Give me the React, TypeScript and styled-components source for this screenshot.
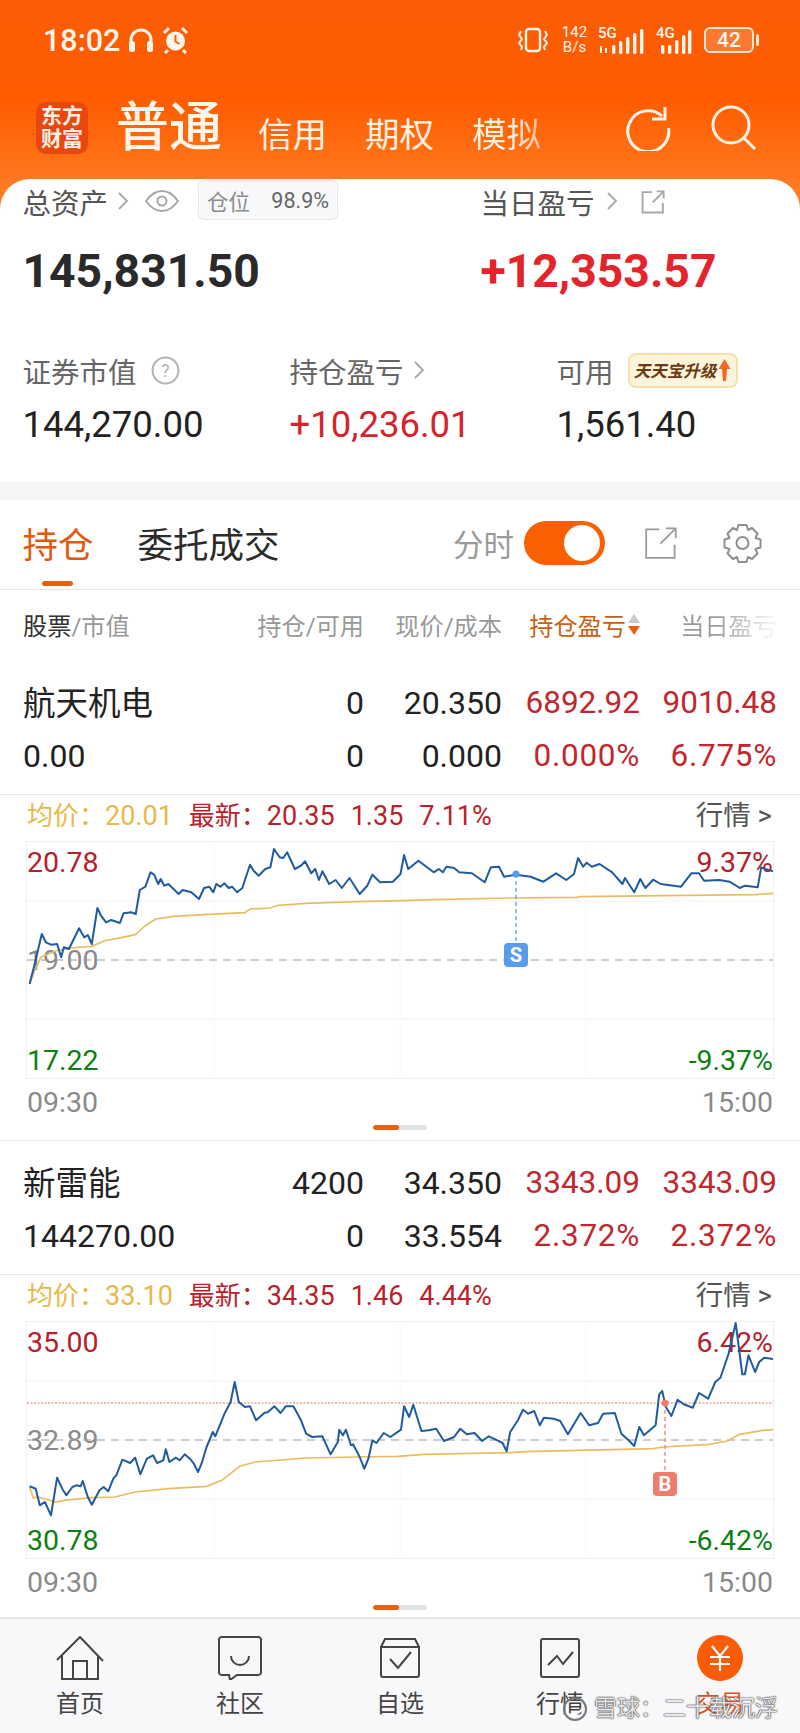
import React from 'react';
import styled, { createGlobalStyle } from 'styled-components';

const GlobalStyle = createGlobalStyle`
  html, body {
    margin: 0;
    padding: 0;
    background: #fff;
  }
  * {
    box-sizing: border-box;
  }
  body {
    font-family: Roboto, "Noto Sans CJK SC", "Noto Sans", sans-serif;
  }
`;

const Page = styled.div`
  position: relative;
  width: 800px;
  height: 1733px;
  overflow: hidden;
  display: flex;
  flex-direction: column;
  background: #fff;
`;

const Header = styled.header`
  flex: none;
  height: 209px;
  color: #fff;
  background: linear-gradient(180deg, #fb5c04 0%, #ff5c00 48%, #ff7a20 88%, #ff7f28 100%);
`;

const StatusBar = styled.div`
  height: 80px;
  display: flex;
  align-items: center;
  padding: 0 46px 0 43px;
`;

const Clock = styled.span`
  font-size: 30.5px;
  font-weight: 500;
  margin-right: 8px;
  color: #fff5ea;
`;

const StatusRight = styled.div`
  margin-left: auto;
  display: flex;
  align-items: center;
  gap: 12px;
`;

const NetSpeed = styled.div`
  font-size: 15px;
  line-height: 15px;
  text-align: center;
  color: #fff5ea;
  width: 27px;
  margin-right: -2px;
`;

const Signal = styled.div<{ $width: number }>`
  position: relative;
  width: ${(p) => p.$width}px;
  height: 28px;
`;

const SignalLabel = styled.span`
  position: absolute;
  left: 0;
  top: 0;
  font-size: 15px;
  line-height: 15px;
  font-weight: 500;
  color: #fff5ea;
`;

const Battery = styled.div`
  width: 50px;
  height: 26px;
  border: 2px solid #ffe6d0;
  border-radius: 6px;
  background: rgba(255, 255, 255, 0.18);
  font-size: 21px;
  font-weight: 500;
  line-height: 22px;
  text-align: center;
  color: #fff5ea;
  position: relative;

  &::after {
    content: '';
    position: absolute;
    right: -7px;
    top: 5px;
    width: 3px;
    height: 12px;
    border-radius: 2px;
    background: #ffe6d0;
  }
`;

const TradeBar = styled.div`
  height: 96px;
  display: flex;
  align-items: center;
  padding: 0 43px 0 36px;
`;

const Logo = styled.div`
  width: 52px;
  height: 52px;
  border-radius: 10px;
  background: #e8480f;
  font-size: 21px;
  line-height: 23px;
  font-weight: 700;
  text-align: center;
  padding-top: 3px;
  margin-right: 28px;
  color: #fff0e4;
`;

const ActiveMode = styled.span`
  font-size: 53px;
  line-height: 60px;
  font-weight: 500;
  margin-right: 36px;
  color: #fff6ec;
`;

const Mode = styled.span<{ $fade?: boolean }>`
  font-size: 34.5px;
  line-height: 44px;
  margin-top: 14px;
  margin-right: 38px;
  color: #fff1e2;
  ${(p) =>
    p.$fade &&
    `
    background: linear-gradient(90deg, #fff1e2 60%, #ffb98a 100%);
    -webkit-background-clip: text;
    background-clip: text;
    color: transparent;
  `}
`;

const HeaderIcons = styled.div`
  margin-left: auto;
  display: flex;
  gap: 40px;
`;

const Summary = styled.section`
  position: relative;
  flex: none;
  margin-top: -30px;
  height: 303px;
  border-radius: 30px 30px 0 0;
  background: #fff;
  padding-left: 22.5px;
`;

const SummaryGrid = styled.div`
  display: grid;
  grid-template-columns: 458px 1fr;
`;

const SummaryHead = styled.div`
  height: 44px;
  display: flex;
  align-items: center;
  font-size: 28.5px;
  color: #555;
`;

const Amount = styled.div<{ $red?: boolean }>`
  height: 96px;
  display: flex;
  align-items: center;
  font-size: 46.3px;
  font-weight: 700;
  color: ${(p) => (p.$red ? '#e3242b' : '#2a2a2a')};
`;

const MetricGrid = styled.div`
  margin-top: 29px;
  display: grid;
  grid-template-columns: 267px 267px 1fr;
`;

const MetricLabel = styled.div`
  height: 44px;
  display: flex;
  align-items: center;
  font-size: 28.5px;
  color: #666;
`;

const MetricValue = styled.div<{ $red?: boolean }>`
  margin-top: 11px;
  height: 44px;
  line-height: 44px;
  font-size: 36.5px;
  color: ${(p) => (p.$red ? '#d5242c' : '#222')};
`;

const Pill = styled.div`
  width: 140px;
  height: 40px;
  margin-left: 19px;
  margin-top: -2px;
  display: flex;
  align-items: center;
  justify-content: space-between;
  padding: 0 8px;
  border: 1px solid #e8e8ea;
  border-radius: 6px;
  background: #f7f8fa;
  font-size: 21.5px;
  color: #666;
`;

const PillLabel = styled.span`
  color: #8b8b8b;
`;

const UpgradeBadge = styled.div`
  margin-left: 14px;
  width: 110px;
  height: 35px;
  display: flex;
  align-items: center;
  justify-content: center;
  gap: 2px;
  border: 2px solid #f6e2a8;
  border-radius: 8px;
  background: #fdf4dd;
  font-size: 16.5px;
  font-weight: 700;
  font-style: italic;
  white-space: nowrap;
  color: #6a3b12;
`;

const Band = styled.div`
  flex: none;
  height: 18px;
  background: #f6f6f6;
`;

const TabBar = styled.div`
  flex: none;
  height: 90px;
  display: flex;
  align-items: center;
  padding: 0 37px 4px 22.5px;
  border-bottom: 1px solid #e6e6e6;
`;

const Tab = styled.span<{ $active?: boolean }>`
  position: relative;
  font-size: 35.5px;
  margin-right: 44px;
  color: ${(p) => (p.$active ? '#e0590f' : '#2b2b2b')};

  ${(p) =>
    p.$active &&
    `
    &::after {
      content: '';
      position: absolute;
      left: 19px;
      top: 64px;
      width: 31px;
      height: 5px;
      border-radius: 3px;
      background: #e8600f;
    }
  `}
`;

const TabTools = styled.div`
  margin-left: auto;
  display: flex;
  align-items: center;
`;

const ToolLabel = styled.span`
  font-size: 30.5px;
  color: #9a9a9a;
  margin-right: 10px;
`;

const Toggle = styled.div`
  position: relative;
  width: 81px;
  height: 44px;
  margin-right: 39px;
  border-radius: 22px;
  background: #fa6000;

  &::after {
    content: '';
    position: absolute;
    right: 5px;
    top: 4px;
    width: 36px;
    height: 36px;
    border-radius: 50%;
    background: #fff;
  }
`;

const ToolGap = styled.span`
  display: inline-block;
  width: 43px;
`;

const StockGrid = styled.div<{ $header?: boolean }>`
  flex: none;
  display: grid;
  grid-template-columns: 234px 107px 138px 138px 137px;
  padding: 0 23px;
  align-items: center;
  height: ${(p) => (p.$header ? '68px' : '53px')};
`;

const ColHead = styled.div<{ $color?: string; $right?: boolean }>`
  font-size: 24.2px;
  color: ${(p) => p.$color || '#999'};
  text-align: ${(p) => (p.$right ? 'right' : 'left')};
  white-space: nowrap;
`;

const SortedHead = styled(ColHead)`
  display: flex;
  justify-content: flex-end;
  align-items: center;
  gap: 2px;
`;

const FadedHead = styled(ColHead)`
  background: linear-gradient(90deg, #999 55%, #f2f2f2 95%);
  -webkit-background-clip: text;
  background-clip: text;
  color: transparent;
`;

const Dark = styled.span`
  color: #333;
`;

const SortArrows = styled.span`
  display: flex;
  flex-direction: column;
  gap: 3px;
`;

const ArrowUp = styled.i`
  width: 0;
  height: 0;
  border: 6px solid transparent;
  border-top: 0;
  border-bottom: 9px solid #c9c9c9;
`;

const ArrowDown = styled.i`
  width: 0;
  height: 0;
  border: 6px solid transparent;
  border-bottom: 0;
  border-top: 9px solid #e8600f;
`;

const Cell = styled.div<{ $red?: boolean; $left?: boolean; $cjk?: boolean; $pct?: boolean }>`
  font-size: ${(p) => (p.$cjk ? '32.5px' : p.$red ? '31.5px' : '32px')};
  margin-top: ${(p) => (p.$cjk ? '-5px' : '0')};
  letter-spacing: ${(p) => (p.$pct ? '0.7px' : '0')};
  text-align: ${(p) => (p.$left ? 'left' : 'right')};
  color: ${(p) => (p.$red ? '#c1272d' : '#222')};
  white-space: nowrap;
`;

const StockRows = styled.div<{ $top: number }>`
  flex: none;
  padding: ${(p) => p.$top}px 0 12px;
  border-bottom: 1px solid #e8e8e8;
`;

const ChartBlock = styled.div`
  flex: none;
  padding: 0 26px;
`;

const ChartHead = styled.div`
  height: 46px;
  display: flex;
  align-items: baseline;
  gap: 16px;
  padding: 5px 2px 0 1px;
  font-size: 26px;
  line-height: 32px;
`;

const HeadGroup = styled.span<{ $color: string }>`
  color: ${(p) => p.$color};
  white-space: nowrap;
`;

const HeadNum = styled.span`
  font-size: 27px;
`;

const QuoteLink = styled.span`
  margin-left: auto;
  font-size: 27.5px;
  color: #555;
`;

const ChartFrame = styled.div`
  position: relative;
  height: 238px;
  border: 1px solid #efefef;
`;

const PlotSvg = styled.svg`
  position: absolute;
  left: 0;
  top: 0;
  width: 100%;
  height: 100%;
`;

const AxisLabel = styled.span<{ $y: number; $color: string; $right?: boolean }>`
  position: absolute;
  top: ${(p) => p.$y - 19}px;
  line-height: 38px;
  font-size: 28.5px;
  color: ${(p) => p.$color};
  ${(p) => (p.$right ? 'right: 0;' : 'left: 0;')}
`;

const TradeBadge = styled.span<{ $x: number; $y: number; $color: string }>`
  position: absolute;
  left: ${(p) => p.$x - 12}px;
  top: ${(p) => p.$y}px;
  width: 24px;
  height: 24px;
  border-radius: 4px;
  background: ${(p) => p.$color};
  color: #fff;
  font-size: 20px;
  font-weight: 700;
  line-height: 24px;
  text-align: center;
`;

const TimeRow = styled.div`
  height: 46px;
  display: flex;
  align-items: center;
  justify-content: space-between;
  padding: 0 1px;
  font-size: 28.5px;
  color: #8a8a8a;
`;

const Pager = styled.div`
  display: flex;
  justify-content: center;
  width: 54px;
  height: 5px;
  margin: 0 auto;
  border-radius: 3px;
  overflow: hidden;
  background: #e3e3e3;

  &::before {
    content: '';
    width: 26px;
    height: 5px;
    margin-right: auto;
    background: #e8600f;
    border-radius: 3px;
  }
`;

const PagerWrap = styled.div<{ $bottom: number }>`
  padding-bottom: ${(p) => p.$bottom}px;
`;

const SectionEnd = styled.div`
  flex: none;
  border-bottom: 1px solid #ececec;
`;

const BottomNav = styled.nav`
  margin-top: auto;
  flex: none;
  height: 116px;
  display: grid;
  grid-template-columns: repeat(5, 160px);
  border-top: 2px solid #e6e6e6;
  background: #f8f8fa;
`;

const NavItem = styled.div<{ $active?: boolean }>`
  display: flex;
  flex-direction: column;
  align-items: center;
  padding-top: 15px;
  font-size: 24px;
  color: ${(p) => (p.$active ? '#d9541a' : '#444')};
`;

const NavIconSlot = styled.div`
  height: 47px;
  display: flex;
  align-items: center;
  justify-content: center;
`;

const NavLabel = styled.span`
  margin-top: 5px;
  line-height: 36px;
`;

const Watermark = styled.div`
  position: absolute;
  right: 22px;
  bottom: 9px;
  display: flex;
  align-items: center;
  gap: 6px;
  font-size: 23px;
  line-height: 30px;
  color: rgba(255, 255, 255, 0.88);
  text-shadow: 0 0 1px #444, 0 0 1px #444, 0 0 2px #666;
`;

/* ---- chart data, traced from the picture ---- */

const line1 =
  '58,550 68,490 82,400 90,425 100,432 112,430 120,470 125,440 135,445 155,383 165,410 172,403 180,430 191,322 198,345 208,365 218,358 235,367 242,338 258,335 266,340 274,268 285,258 295,215 302,222 310,250 315,235 322,255 330,250 350,280 358,268 375,275 390,295 400,262 410,258 418,275 424,250 432,258 440,248 448,262 455,258 465,275 475,262 490,192 497,210 507,225 520,205 530,200 537,145 548,170 555,172 563,155 578,205 590,195 598,182 610,218 618,205 625,238 632,212 645,250 658,238 670,262 685,232 705,280 720,255 730,222 745,245 770,243 785,220 792,163 800,205 820,180 850,215 860,205 868,215 875,198 890,202 900,215 925,218 950,245 962,200 978,198 988,228 1012,222 1040,228 1065,243 1090,218 1110,238 1125,220 1133,172 1143,198 1150,186 1160,198 1175,190 1200,215 1220,250 1225,232 1243,275 1255,235 1265,262 1280,237 1295,250 1335,258 1355,218 1370,218 1380,240 1410,238 1430,243 1450,262 1460,255 1485,260 1492,200 1500,205 1515,212';
const avg1 =
  '58,550 68,510 80,470 110,450 140,442 180,437 205,420 240,410 265,402 285,375 305,355 340,347 400,342 480,336 490,325 530,322 545,314 600,308 700,303 790,300 850,297 1000,292 1130,290 1140,288 1300,285 1480,282 1515,278';
const line2 =
  '58,648 70,655 78,705 88,695 100,735 112,622 122,655 130,675 142,650 150,645 158,648 162,632 172,680 180,703 195,660 203,650 212,663 222,625 228,615 240,568 255,578 265,562 275,612 288,565 300,555 308,578 320,570 325,537 332,575 345,562 352,570 362,552 372,565 380,580 388,605 395,580 405,530 417,485 422,498 440,430 452,395 460,335 468,395 480,410 490,408 502,450 518,428 525,425 538,408 550,428 560,408 575,408 590,450 600,490 612,500 632,498 648,552 662,515 665,478 672,495 678,478 688,525 692,522 705,560 714,595 722,565 730,510 738,518 752,488 765,500 786,478 792,408 802,440 810,403 826,482 840,480 855,475 870,512 890,500 902,475 915,492 930,488 945,512 958,498 975,510 985,518 993,543 1000,485 1015,450 1025,418 1035,430 1047,422 1058,465 1066,442 1085,445 1098,452 1113,492 1138,428 1155,465 1172,458 1182,430 1205,428 1218,490 1232,510 1243,527 1253,470 1262,495 1285,465 1292,372 1298,362 1305,410 1316,437 1328,388 1340,402 1358,412 1370,368 1388,385 1402,335 1412,322 1428,250 1442,158 1455,312 1460,312 1467,255 1480,305 1488,275 1498,262 1515,266';
const avg2 =
  '58,650 65,682 75,680 110,695 125,690 180,682 225,680 265,665 330,655 405,648 435,630 470,588 500,575 600,563 700,560 780,558 830,552 1000,547 1030,544 1280,535 1300,530 1390,522 1425,512 1450,492 1495,480 1515,478';

// traced coordinates are in the scale of the crop (1.96 wide, 3 high)
const toPlot = (pts: string, y0: number) =>
  pts
    .split(' ')
    .map((p) => {
      const [x, y] = p.split(',').map(Number);
      return `${(x / 1.96 - 27).toFixed(1)},${((y - y0) / 3).toFixed(1)}`;
    })
    .join(' ');

type ChartInfo = {
  avg: string;
  latest: string;
  change: string;
  pct: string;
  high: string;
  mid: string;
  low: string;
  up: string;
  down: string;
  price: string;
  mean: string;
  y0: number;
  markX: number;
  markY: number;
  badgeY: number;
  badge: string;
  badgeColor: string;
  cost?: number;
};

const PlotLines = ({ c }: { c: ChartInfo }) => (
  <PlotSvg viewBox="0 0 746 236">
    {[59, 177].map((y) => (
      <line key={y} x1="0" x2="746" y1={y} y2={y} stroke="#f2f2f2" />
    ))}
    {[187, 373, 559].map((x) => (
      <line key={x} x1={x} x2={x} y1="0" y2="236" stroke="#f8f8f8" />
    ))}
    <line x1="0" x2="746" y1="118" y2="118" stroke="#999" strokeDasharray="8 6" strokeWidth="1.2" />
    {c.cost && (
      <line x1="0" x2="746" y1={c.cost} y2={c.cost} stroke="#d9785a" strokeDasharray="2 1.5" />
    )}
    <polyline points={toPlot(c.mean, c.y0)} fill="none" stroke="#e8bd62" strokeWidth="1.7" />
    <polyline points={toPlot(c.price, c.y0)} fill="none" stroke="#1f5b9e" strokeWidth="2" strokeLinejoin="round" />
    <line
      x1={c.markX}
      x2={c.markX}
      y1={c.markY}
      y2={c.badgeY}
      stroke={c.badgeColor}
      strokeDasharray="4 3"
      strokeWidth="1.3"
    />
    <circle cx={c.markX} cy={c.markY} r="3.5" fill={c.badgeColor} />
  </PlotSvg>
);

const Chart = ({ c, bottom }: { c: ChartInfo; bottom: number }) => (
  <ChartBlock>
    <ChartHead>
      <HeadGroup $color="#e9b949">均价：<HeadNum>{c.avg}</HeadNum></HeadGroup>
      <HeadGroup $color="#b9212c">最新：<HeadNum>{c.latest}</HeadNum></HeadGroup>
      <HeadGroup $color="#b9212c"><HeadNum>{c.change}</HeadNum></HeadGroup>
      <HeadGroup $color="#b9212c"><HeadNum>{c.pct}</HeadNum></HeadGroup>
      <QuoteLink>行情 &gt;</QuoteLink>
    </ChartHead>
    <ChartFrame>
      <AxisLabel $y={21} $color="#b5202a">{c.high}</AxisLabel>
      <AxisLabel $y={119} $color="#8a8a8a">{c.mid}</AxisLabel>
      <AxisLabel $y={219} $color="#0c7f12">{c.low}</AxisLabel>
      <AxisLabel $y={21} $color="#b5202a" $right>{c.up}</AxisLabel>
      <AxisLabel $y={219} $color="#0c7f12" $right>{c.down}</AxisLabel>
      <PlotLines c={c} />
      <TradeBadge $x={c.markX} $y={c.badgeY} $color={c.badgeColor}>{c.badge}</TradeBadge>
    </ChartFrame>
    <TimeRow>
      <span>09:30</span>
      <span>15:00</span>
    </TimeRow>
    <PagerWrap $bottom={bottom}>
      <Pager />
    </PagerWrap>
  </ChartBlock>
);

/* ---- icons ---- */

const Chevron = ({ gap = 9 }: { gap?: number }) => (
  <svg width="12" height="20" viewBox="0 0 12 20" style={{ marginLeft: gap }}>
    <path d="M2 2l8 8-8 8" fill="none" stroke="#a8a8a8" strokeWidth="1.8" />
  </svg>
);

const ShareIcon = ({ size, color = '#aaa', sw = 2 }: { size: number; color?: string; sw?: number }) => (
  <svg width={size} height={size} viewBox="0 0 32 32">
    <path d="M14 4H2v26h26V18M20 3h9v9M29 3L15 17" fill="none" stroke={color} strokeWidth={sw} />
  </svg>
);

const App = () => {
  const first: ChartInfo = {
    avg: '20.01',
    latest: '20.35',
    change: '1.35',
    pct: '7.11%',
    high: '20.78',
    mid: '19.00',
    low: '17.22',
    up: '9.37%',
    down: '-9.37%',
    price: line1,
    mean: avg1,
    y0: 124,
    markX: 489,
    markY: 32,
    badgeY: 101,
    badge: 'S',
    badgeColor: '#5b9bee',
  };
  const second: ChartInfo = {
    avg: '33.10',
    latest: '34.35',
    change: '1.46',
    pct: '4.44%',
    high: '35.00',
    mid: '32.89',
    low: '30.78',
    up: '6.42%',
    down: '-6.42%',
    price: line2,
    mean: avg2,
    y0: 155,
    markX: 638,
    markY: 81,
    badgeY: 150,
    badge: 'B',
    badgeColor: '#ee7d70',
    cost: 81,
  };

  return (
    <Page>
      <GlobalStyle />
      <Header>
        <StatusBar>
          <Clock>18:02</Clock>
          <svg width="26" height="26" viewBox="0 0 26 26">
            <path d="M3 21V13a10 10 0 0 1 20 0v8" fill="none" stroke="#fff5ea" strokeWidth="3" />
            <rect x="1" y="14" width="6" height="11" rx="2.5" fill="#fff5ea" />
            <rect x="19" y="14" width="6" height="11" rx="2.5" fill="#fff5ea" />
          </svg>
          <svg width="27" height="28" viewBox="0 0 27 28" style={{ marginLeft: 8 }}>
            <circle cx="13.5" cy="15" r="9.5" fill="#fff5ea" />
            <path d="M13.5 9v6.5l4 2.5" fill="none" stroke="#fb5c04" strokeWidth="2" />
            <path d="M2 7l5-5M25 7l-5-5M6 24l-3 3M21 24l3 3" stroke="#fff5ea" strokeWidth="3" />
          </svg>
          <StatusRight>
            <svg width="32" height="26" viewBox="0 0 32 26">
              <rect x="9" y="2" width="14" height="22" rx="3" fill="none" stroke="#fff5ea" strokeWidth="2.4" />
              <path d="M4 4l-2 4 3 4-3 4 3 4-1 3M28 4l2 4-3 4 3 4-3 4 1 3" fill="none" stroke="#fff5ea" strokeWidth="2" />
            </svg>
            <NetSpeed>142<br />B/s</NetSpeed>
            <Signal $width={46}>
              <SignalLabel>5G</SignalLabel>
              <svg width="46" height="28" viewBox="0 0 46 28">
                <path d="M3 20v7M8 22v5" stroke="#fff5ea" strokeWidth="2" />
                {[14, 21, 28, 35, 42].map((x, i) => (
                  <rect key={x} x={x} y={19 - i * 4} width="3.4" height={9 + i * 4} rx="1.5" fill="#fff5ea" />
                ))}
              </svg>
            </Signal>
            <Signal $width={36}>
              <SignalLabel>4G</SignalLabel>
              <svg width="36" height="28" viewBox="0 0 36 28">
                {[5, 12, 19, 26, 32].map((x, i) => (
                  <rect key={x} x={x} y={i < 2 ? 19 : 19 - (i - 1) * 5} width="3.4" height={i < 2 ? 9 : 9 + (i - 1) * 5} rx="1.5" fill="#fff5ea" />
                ))}
              </svg>
            </Signal>
            <Battery>42</Battery>
          </StatusRight>
        </StatusBar>
        <TradeBar>
          <Logo>东方<br />财富</Logo>
          <ActiveMode>普通</ActiveMode>
          <Mode>信用</Mode>
          <Mode>期权</Mode>
          <Mode $fade>模拟</Mode>
          <HeaderIcons>
            <svg width="46" height="46" viewBox="0 0 46 46">
              <path d="M37 11A20.5 20.5 0 1 0 43.5 23" fill="none" stroke="#fff5ea" strokeWidth="3" />
              <path d="M27 14h13V2" fill="none" stroke="#fff5ea" strokeWidth="3" />
            </svg>
            <svg width="46" height="46" viewBox="0 0 46 46">
              <circle cx="20" cy="20" r="18" fill="none" stroke="#fff1e2" strokeWidth="3" />
              <path d="M33 33l11 11" stroke="#fff1e2" strokeWidth="3" />
            </svg>
          </HeaderIcons>
        </TradeBar>
      </Header>

      <Summary>
        <SummaryGrid>
          <div>
            <SummaryHead>
              总资产
              <Chevron />
              <svg width="34" height="22" viewBox="0 0 34 22" style={{ marginLeft: 16 }}>
                <path d="M1 11C6 4 11 1 17 1s11 3 16 10c-5 7-10 10-16 10S6 18 1 11z" fill="none" stroke="#a6a6a6" strokeWidth="2" />
                <circle cx="17" cy="11" r="4.5" fill="none" stroke="#a6a6a6" strokeWidth="2" />
              </svg>
              <Pill>
                <PillLabel>仓位</PillLabel>
                <span>98.9%</span>
              </Pill>
            </SummaryHead>
            <Amount>145,831.50</Amount>
          </div>
          <div>
            <SummaryHead>
              当日盈亏
              <Chevron gap={11} />
              <span style={{ width: 23 }} />
              <ShareIcon size={25} color="#a8a8a8" sw={2.4} />
            </SummaryHead>
            <Amount $red>+12,353.57</Amount>
          </div>
        </SummaryGrid>
        <MetricGrid>
          <div>
            <MetricLabel>
              证券市值
              <svg width="29" height="29" viewBox="0 0 28 28" style={{ marginLeft: 14 }}>
                <circle cx="14" cy="14" r="12.5" fill="none" stroke="#b5b5b5" strokeWidth="2" />
                <text x="14" y="20" textAnchor="middle" fontSize="17" fill="#b5b5b5" fontFamily="Roboto">?</text>
              </svg>
            </MetricLabel>
            <MetricValue>144,270.00</MetricValue>
          </div>
          <div>
            <MetricLabel>
              持仓盈亏
              <Chevron />
            </MetricLabel>
            <MetricValue $red>+10,236.01</MetricValue>
          </div>
          <div>
            <MetricLabel>
              可用
              <UpgradeBadge>
                天天宝升级
                <svg width="13" height="24" viewBox="0 0 13 24">
                  <path d="M6.5 1L12.5 11H9L8 23H5L4 11H.5z" fill="#f0691e" />
                </svg>
              </UpgradeBadge>
            </MetricLabel>
            <MetricValue>1,561.40</MetricValue>
          </div>
        </MetricGrid>
      </Summary>

      <Band />

      <TabBar>
        <Tab $active>持仓</Tab>
        <Tab>委托成交</Tab>
        <TabTools>
          <ToolLabel>分时</ToolLabel>
          <Toggle />
          <ShareIcon size={35} color="#9a9a9a" sw={1.6} />
          <ToolGap />
          <svg width="41" height="40" viewBox="0 0 40 40">
            <path
              d="M16 2h8l1.5 5 4-2 5.500 5.500-2 4.500 5 1.500v8l-5 1.500 2 4.500-5.500 5.500-4-2-1.500 5h-8l-1.500-5-4 2-5.500-5.500 2-4.500-5-1.500v-8l5-1.500-2-4.500L10.500 5l4 2z"
              fill="none"
              stroke="#8f8f8f"
              strokeWidth="2"
              strokeLinejoin="round"
            />
            <circle cx="20" cy="20" r="6" fill="none" stroke="#8f8f8f" strokeWidth="2" />
          </svg>
        </TabTools>
      </TabBar>

      <StockGrid $header>
        <ColHead><Dark>股票</Dark>/市值</ColHead>
        <ColHead $right>持仓/可用</ColHead>
        <ColHead $right>现价/成本</ColHead>
        <SortedHead $color="#c9600f">
          持仓盈亏
          <SortArrows><ArrowUp /><ArrowDown /></SortArrows>
        </SortedHead>
        <FadedHead $right>当日盈亏</FadedHead>
      </StockGrid>

      <StockRows $top={18}>
        <StockGrid>
          <Cell $left $cjk>航天机电</Cell>
          <Cell>0</Cell>
          <Cell>20.350</Cell>
          <Cell $red>6892.92</Cell>
          <Cell $red>9010.48</Cell>
        </StockGrid>
        <StockGrid>
          <Cell $left>0.00</Cell>
          <Cell>0</Cell>
          <Cell>0.000</Cell>
          <Cell $red $pct>0.000%</Cell>
          <Cell $red $pct>6.775%</Cell>
        </StockGrid>
      </StockRows>
      <SectionEnd>
        <Chart c={first} bottom={10} />
      </SectionEnd>

      <StockRows $top={15}>
        <StockGrid>
          <Cell $left $cjk>新雷能</Cell>
          <Cell>4200</Cell>
          <Cell>34.350</Cell>
          <Cell $red>3343.09</Cell>
          <Cell $red>3343.09</Cell>
        </StockGrid>
        <StockGrid>
          <Cell $left>144270.00</Cell>
          <Cell>0</Cell>
          <Cell>33.554</Cell>
          <Cell $red $pct>2.372%</Cell>
          <Cell $red $pct>2.372%</Cell>
        </StockGrid>
      </StockRows>
      <Chart c={second} bottom={5} />

      <BottomNav>
        <NavItem>
          <NavIconSlot>
            <svg width="48" height="44" viewBox="0 0 48 44">
              <path d="M1 24L24 1l23 24M6 20v23h36V20M17 43V25h14v18" fill="none" stroke="#444" strokeWidth="2" />
            </svg>
          </NavIconSlot>
          <NavLabel>首页</NavLabel>
        </NavItem>
        <NavItem>
          <NavIconSlot>
            <svg width="44" height="44" viewBox="0 0 44 44">
              <path d="M4 1h36a3 3 0 0 1 3 2v34a3 3 0 0 1-3 2H19l-7 5-1-5H4a3 3 0 0 1-3-2V3a3 3 0 0 1 3-2z" fill="none" stroke="#444" strokeWidth="2" />
              <path d="M13 20a9 9 0 0 0 18 0" fill="none" stroke="#444" strokeWidth="2" />
            </svg>
          </NavIconSlot>
          <NavLabel>社区</NavLabel>
        </NavItem>
        <NavItem>
          <NavIconSlot>
            <svg width="40" height="40" viewBox="0 0 40 40">
              <path d="M1 9l4-8h30l4 8M1 9h38v28a2 2 0 0 1-2 2H3a2 2 0 0 1-2-2z" fill="none" stroke="#444" strokeWidth="2" />
              <path d="M10 21l8 9L31 14" fill="none" stroke="#444" strokeWidth="2" />
            </svg>
          </NavIconSlot>
          <NavLabel>自选</NavLabel>
        </NavItem>
        <NavItem>
          <NavIconSlot>
            <svg width="40" height="40" viewBox="0 0 40 40">
              <rect x="1" y="1" width="38" height="38" rx="2" fill="none" stroke="#444" strokeWidth="2" />
              <path d="M8 27l9-9 6 8 10-12" fill="none" stroke="#444" strokeWidth="2" />
            </svg>
          </NavIconSlot>
          <NavLabel>行情</NavLabel>
        </NavItem>
        <NavItem $active>
          <NavIconSlot>
            <svg width="46" height="46" viewBox="0 0 46 46">
              <circle cx="23" cy="23" r="23" fill="#fa5c05" />
              <path d="M15 11l8 10 8-10M13 22h20M13 29h20M23 21v15" fill="none" stroke="#fff" strokeWidth="2.2" />
            </svg>
          </NavIconSlot>
          <NavLabel>交易</NavLabel>
        </NavItem>
      </BottomNav>

      <Watermark>
        <svg width="26" height="26" viewBox="0 0 26 26">
          <circle cx="13" cy="13" r="11" fill="none" stroke="#777" strokeWidth="2" />
          <path d="M5 17c5 3 11 2 15-4" fill="none" stroke="#fff" strokeWidth="2" />
        </svg>
        雪球：二十载沉浮
      </Watermark>
    </Page>
  );
};

export default App;
